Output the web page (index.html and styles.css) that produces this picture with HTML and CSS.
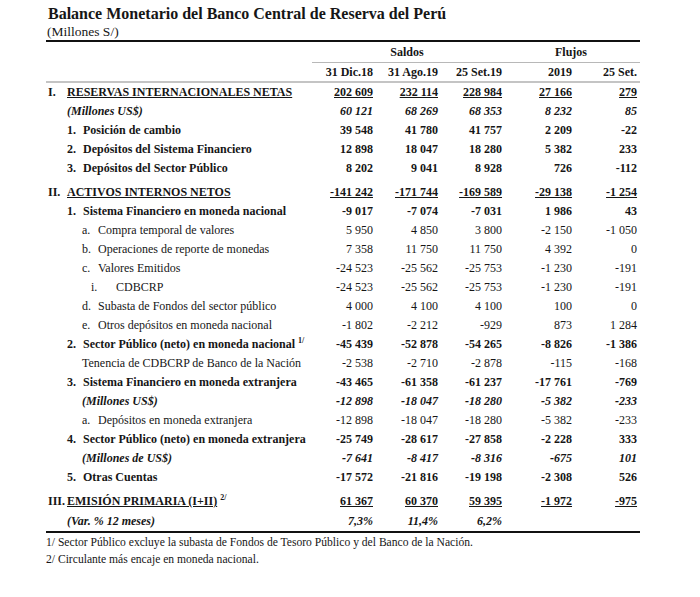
FILE: index.html
```html
<!DOCTYPE html>
<html lang="es">
<head>
<meta charset="utf-8">
<title>Balance Monetario</title>
<link rel="stylesheet" href="styles.css">
</head>
<body>
<div class="page">
  <h1 class="title">Balance Monetario del Banco Central de Reserva del Perú</h1>
  <div class="subtitle">(Millones S/)</div>
  <table class="bal">
    <colgroup>
      <col class="c-label"><col class="c1"><col class="c2"><col class="c3"><col class="c4"><col class="c5">
    </colgroup>
    <thead>
      <tr class="h1">
        <th></th>
        <th colspan="3" class="grp">Saldos</th>
        <th colspan="2" class="grp">Flujos</th>
      </tr>
      <tr class="h2">
        <th></th>
        <th>31 Dic.18</th><th>31 Ago.19</th><th>25 Set.19</th><th>2019</th><th class="last">25 Set.</th>
      </tr>
    </thead>
    <tbody>
      <tr class="r b u">
        <td class="l0"><span class="m0">I.</span><span class="ul">RESERVAS INTERNACIONALES NETAS</span></td>
        <td>202 609</td><td>232 114</td><td>228 984</td><td>27 166</td><td class="last">279</td>
      </tr>
      <tr class="r bi">
        <td class="l1">(Millones US$)</td>
        <td>60 121</td><td>68 269</td><td>68 353</td><td>8 232</td><td class="last">85</td>
      </tr>
      <tr class="r b">
        <td class="l1"><span class="m1">1.</span>Posición de cambio</td>
        <td>39 548</td><td>41 780</td><td>41 757</td><td>2 209</td><td class="last">-22</td>
      </tr>
      <tr class="r b">
        <td class="l1"><span class="m1">2.</span>Depósitos del Sistema Financiero</td>
        <td>12 898</td><td>18 047</td><td>18 280</td><td>5 382</td><td class="last">233</td>
      </tr>
      <tr class="r b">
        <td class="l1"><span class="m1">3.</span>Depósitos del Sector Público</td>
        <td>8 202</td><td>9 041</td><td>8 928</td><td>726</td><td class="last">-112</td>
      </tr>
      <tr class="sp"><td colspan="6"></td></tr>
      <tr class="r b u">
        <td class="l0"><span class="m0">II.</span><span class="ul">ACTIVOS INTERNOS NETOS</span></td>
        <td>-141 242</td><td>-171 744</td><td>-169 589</td><td>-29 138</td><td class="last">-1 254</td>
      </tr>
      <tr class="r b">
        <td class="l1"><span class="m1">1.</span>Sistema Financiero en moneda nacional</td>
        <td>-9 017</td><td>-7 074</td><td>-7 031</td><td>1 986</td><td class="last">43</td>
      </tr>
      <tr class="r">
        <td class="l2"><span class="m2">a.</span>Compra temporal de valores</td>
        <td>5 950</td><td>4 850</td><td>3 800</td><td>-2 150</td><td class="last">-1 050</td>
      </tr>
      <tr class="r">
        <td class="l2"><span class="m2">b.</span>Operaciones de reporte de monedas</td>
        <td>7 358</td><td>11 750</td><td>11 750</td><td>4 392</td><td class="last">0</td>
      </tr>
      <tr class="r">
        <td class="l2"><span class="m2">c.</span>Valores Emitidos</td>
        <td>-24 523</td><td>-25 562</td><td>-25 753</td><td>-1 230</td><td class="last">-191</td>
      </tr>
      <tr class="r">
        <td class="l3"><span class="m3">i.</span>CDBCRP</td>
        <td>-24 523</td><td>-25 562</td><td>-25 753</td><td>-1 230</td><td class="last">-191</td>
      </tr>
      <tr class="r">
        <td class="l2"><span class="m2">d.</span>Subasta de Fondos del sector público</td>
        <td>4 000</td><td>4 100</td><td>4 100</td><td>100</td><td class="last">0</td>
      </tr>
      <tr class="r">
        <td class="l2"><span class="m2">e.</span>Otros depósitos en moneda nacional</td>
        <td>-1 802</td><td>-2 212</td><td>-929</td><td>873</td><td class="last">1 284</td>
      </tr>
      <tr class="r b">
        <td class="l1"><span class="m1">2.</span>Sector Público (neto) en moneda nacional <sup class="fn">1/</sup></td>
        <td>-45 439</td><td>-52 878</td><td>-54 265</td><td>-8 826</td><td class="last">-1 386</td>
      </tr>
      <tr class="r">
        <td class="l2">Tenencia de CDBCRP de Banco de la Nación</td>
        <td>-2 538</td><td>-2 710</td><td>-2 878</td><td>-115</td><td class="last">-168</td>
      </tr>
      <tr class="r b">
        <td class="l1"><span class="m1">3.</span>Sistema Financiero en moneda extranjera</td>
        <td>-43 465</td><td>-61 358</td><td>-61 237</td><td>-17 761</td><td class="last">-769</td>
      </tr>
      <tr class="r bi">
        <td class="l2">(Millones US$)</td>
        <td>-12 898</td><td>-18 047</td><td>-18 280</td><td>-5 382</td><td class="last">-233</td>
      </tr>
      <tr class="r">
        <td class="l2"><span class="m2">a.</span>Depósitos en moneda extranjera</td>
        <td>-12 898</td><td>-18 047</td><td>-18 280</td><td>-5 382</td><td class="last">-233</td>
      </tr>
      <tr class="r b">
        <td class="l1"><span class="m1">4.</span>Sector Público (neto) en moneda extranjera</td>
        <td>-25 749</td><td>-28 617</td><td>-27 858</td><td>-2 228</td><td class="last">333</td>
      </tr>
      <tr class="r bi">
        <td class="l2">(Millones de US$)</td>
        <td>-7 641</td><td>-8 417</td><td>-8 316</td><td>-675</td><td class="last">101</td>
      </tr>
      <tr class="r b">
        <td class="l1"><span class="m1">5.</span>Otras Cuentas</td>
        <td>-17 572</td><td>-21 816</td><td>-19 198</td><td>-2 308</td><td class="last">526</td>
      </tr>
      <tr class="sp"><td colspan="6"></td></tr>
      <tr class="r b u">
        <td class="l0"><span class="m0">III.</span><span class="ul">EMISIÓN PRIMARIA (I+II)</span> <sup class="fn">2/</sup></td>
        <td>61 367</td><td>60 370</td><td>59 395</td><td>-1 972</td><td class="last">-975</td>
      </tr>
      <tr class="r bi endrow">
        <td class="l1">(Var. % 12 meses)</td>
        <td>7,3%</td><td>11,4%</td><td>6,2%</td><td></td><td class="last"></td>
      </tr>
    </tbody>
  </table>
  <div class="notes">
    <p>1/ Sector Público excluye la subasta de Fondos de Tesoro Público y del Banco de la Nación.</p>
    <p>2/ Circulante más encaje en moneda nacional.</p>
  </div>
</div>
</body>
</html>
```

FILE: styles.css
```css
html, body {
  margin: 0;
  padding: 0;
  background: #ffffff;
}

body {
  font-family: "Liberation Serif", "Times New Roman", serif;
  color: #161616;
}

.page {
  width: 594px;
  margin-left: 46px;
  padding-top: 4px;
}

.title {
  margin: 0 0 0 2px;
  font-size: 16px;
  font-weight: bold;
  line-height: 20px;
}

.subtitle {
  font-size: 13.5px;
  line-height: 16px;
  padding-left: 1px;
  border-bottom: 2px solid #111;
}

.bal {
  width: 594px;
  border-collapse: collapse;
  table-layout: fixed;
  font-size: 12px;
}

.c-label { width: 266px; }
.c1 { width: 61px; }
.c2 { width: 65px; }
.c3 { width: 64px; }
.c4 { width: 70px; }
.c5 { width: 68px; }

.bal th {
  padding: 0;
  font-weight: bold;
  text-align: right;
  white-space: nowrap;
}

.h1 th {
  height: 17px;
  line-height: 14px;
  padding-top: 3px;
  vertical-align: top;
}

.h1 th.grp {
  text-align: center;
  border-bottom: 1px solid #b8b8b8;
}

.h2 th {
  height: 18px;
  line-height: 18px;
  border-bottom: 2px solid #c4c4c4;
}

.bal td {
  padding: 0;
  text-align: right;
  white-space: nowrap;
}

.bal .last {
  padding-right: 3px;
}

.r td {
  height: 19px;
  line-height: 19px;
}

.sp td {
  height: 5px;
  padding: 0;
}

.r td:first-child {
  text-align: left;
}

.b td { font-weight: bold; }
.bi td { font-weight: bold; font-style: italic; }
.u td + td { text-decoration: underline; }
.ul { text-decoration: underline; }

.endrow td {
  border-bottom: 2px solid #111;
  height: 20px;
}

.l0 { padding-left: 2px !important; }
.l1 { padding-left: 21px !important; }
.l2 { padding-left: 36px !important; }
.l3 { padding-left: 45px !important; }

.m0, .m1, .m2, .m3 {
  display: inline-block;
}
.m0 { width: 19px; }
.m1 { width: 16px; }
.m2 { width: 16px; }
.m3 { width: 25px; }

.fn {
  font-size: 8px;
  font-weight: bold;
  line-height: 0;
  vertical-align: 5px;
}

.notes {
  font-size: 11.6px;
  padding-top: 1px;
}

.notes p {
  margin: 0;
  line-height: 17px;
}
```
